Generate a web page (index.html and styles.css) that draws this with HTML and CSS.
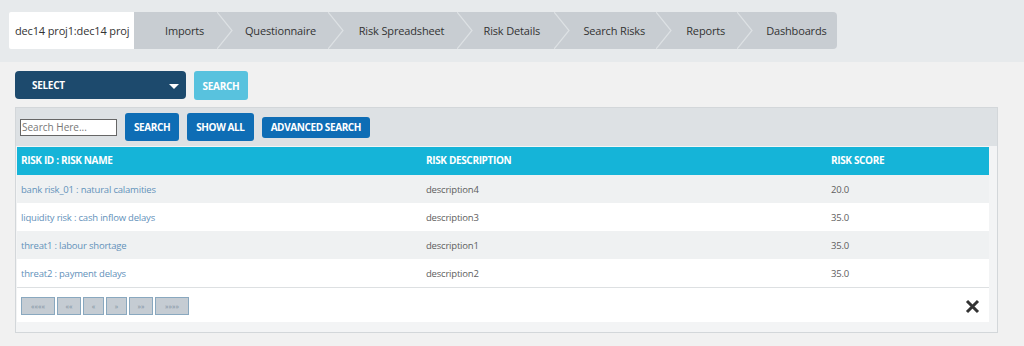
FILE: index.html
```html
<!DOCTYPE html>
<html lang="en">
<head>
  <meta charset="UTF-8" />
  <title>Search Risks</title>
  <link rel="stylesheet" href="styles.css">
</head>
<body>

  <header class="topbar">
    <nav class="tabs">
      <a class="tab current">dec14 proj1:dec14 proj</a>
      <div class="tab-strip">
        <a class="tab t-imports">Imports</a>
        <span class="sep"><svg width="16" height="37" viewBox="0 0 16 37"><polyline points="0,0 15,18.5 0,37" fill="none" stroke="#dde1e4" stroke-width="1.2"/></svg></span>
        <a class="tab t-quest">Questionnaire</a>
        <span class="sep"><svg width="16" height="37" viewBox="0 0 16 37"><polyline points="0,0 15,18.5 0,37" fill="none" stroke="#dde1e4" stroke-width="1.2"/></svg></span>
        <a class="tab t-sheet">Risk Spreadsheet</a>
        <span class="sep"><svg width="16" height="37" viewBox="0 0 16 37"><polyline points="0,0 15,18.5 0,37" fill="none" stroke="#dde1e4" stroke-width="1.2"/></svg></span>
        <a class="tab t-details">Risk Details</a>
        <span class="sep"><svg width="16" height="37" viewBox="0 0 16 37"><polyline points="0,0 15,18.5 0,37" fill="none" stroke="#dde1e4" stroke-width="1.2"/></svg></span>
        <a class="tab t-search">Search Risks</a>
        <span class="sep"><svg width="16" height="37" viewBox="0 0 16 37"><polyline points="0,0 15,18.5 0,37" fill="none" stroke="#dde1e4" stroke-width="1.2"/></svg></span>
        <a class="tab t-reports">Reports</a>
        <span class="sep"><svg width="16" height="37" viewBox="0 0 16 37"><polyline points="0,0 15,18.5 0,37" fill="none" stroke="#dde1e4" stroke-width="1.2"/></svg></span>
        <a class="tab t-dash">Dashboards</a>
      </div>
    </nav>
  </header>

  <main class="content">
    <div class="filter-row">
      <div class="select-box">
        <span>SELECT</span>
        <span class="caret"></span>
      </div>
      <button class="btn-light">SEARCH</button>
    </div>

    <section class="panel">
      <div class="toolbar">
        <input class="search-input" type="text" placeholder="Search Here...">
        <button class="btn-blue tall">SEARCH</button>
        <button class="btn-blue tall">SHOW ALL</button>
        <button class="btn-blue">ADVANCED SEARCH</button>
      </div>

      <div class="panel-body">
        <table class="risk-table">
          <thead>
            <tr>
              <th class="c-name">RISK ID : RISK NAME</th>
              <th class="c-desc">RISK DESCRIPTION</th>
              <th class="c-score">RISK SCORE</th>
            </tr>
          </thead>
          <tbody>
            <tr>
              <td><a>bank risk_01 : natural calamities</a></td>
              <td>description4</td>
              <td>20.0</td>
            </tr>
            <tr>
              <td><a>liquidity risk : cash inflow delays</a></td>
              <td>description3</td>
              <td>35.0</td>
            </tr>
            <tr>
              <td><a>threat1 : labour shortage</a></td>
              <td>description1</td>
              <td>35.0</td>
            </tr>
            <tr>
              <td><a>threat2 : payment delays</a></td>
              <td>description2</td>
              <td>35.0</td>
            </tr>
          </tbody>
        </table>

        <div class="table-footer">
          <div class="pager">
            <button class="pg w-first">&laquo;&laquo;&laquo;&laquo;</button>
            <button class="pg w-prev2">&laquo;&laquo;</button>
            <button class="pg w-one">&laquo;</button>
            <button class="pg w-one">&raquo;</button>
            <button class="pg w-prev2">&raquo;&raquo;</button>
            <button class="pg w-first">&raquo;&raquo;&raquo;&raquo;</button>
          </div>
          <span class="close-x">
            <svg width="15" height="15" viewBox="0 0 15 15"><path d="M2 2 L13 13 M13 2 L2 13" stroke="#333" stroke-width="3" stroke-linecap="butt"/></svg>
          </span>
        </div>
      </div>
    </section>
  </main>

</body>
</html>
```

FILE: styles.css
```css
* { margin: 0; padding: 0; box-sizing: border-box; }
body {
  font-family: 'Open Sans', 'Noto Sans', sans-serif;
  background: #f1f1f1;
  color: #333;
  width: 1024px;
  height: 346px;
  overflow: hidden;
}

/* --- Top tab bar --- */
.topbar {
  background: #e7eaec;
  height: 62px;
  padding: 12px 0 0 9px;
}

.tabs {
  display: flex;
  height: 37px;
}

.tab {
  display: flex;
  align-items: center;
  font-size: 11px;
  letter-spacing: -0.15px;
  color: #333;
  white-space: nowrap;
  cursor: pointer;
}

.tab.current {
  background: #fff;
  width: 125px;
  padding-left: 6px;
  border-radius: 2px 0 0 2px;
}

.tab-strip {
  display: flex;
  background: #c8cdd2;
  width: 703px;
  border-radius: 0 4px 4px 0;
}

.sep { display: flex; width: 16px; }

.t-imports { width: 83px; padding-left: 31px; }
.t-quest { width: 95px; padding-left: 12px; }
.t-sheet { width: 113px; padding-left: 15px; }
.t-details { width: 82px; padding-left: 11px; }
.t-search { width: 86px; padding-left: 13px; }
.t-reports { width: 65px; padding-left: 14px; }
.t-dash { width: 84px; padding-left: 13px; }

/* --- Select row --- */
.content { padding: 9px 26px 0 15px; }

.filter-row {
  display: flex;
  gap: 8px;
  align-items: flex-start;
}

.select-box {
  width: 171px;
  height: 28px;
  background: #1d4a6d;
  border-radius: 4px;
  color: #fff;
  font-size: 10px;
  font-weight: 700;
  letter-spacing: -0.3px;
  display: flex;
  align-items: center;
  justify-content: space-between;
  padding: 0 7px 0 17px;
  margin-bottom: 8px;
}

.caret {
  width: 0; height: 0;
  border-left: 5px solid transparent;
  border-right: 5px solid transparent;
  border-top: 5px solid #fff;
  margin-top: 2px;
}

button {
  font-family: inherit;
  border: none;
  cursor: pointer;
}

.btn-light {
  width: 54px;
  height: 29px;
  background: #58c2de;
  color: #fff;
  font-size: 10px;
  font-weight: 700;
  letter-spacing: -0.3px;
  border-radius: 3px;
}

/* --- Panel --- */
.panel {
  border: 1px solid #d3d7da;
  background: #eceeef;
}

.toolbar {
  background: #dde1e4;
  height: 38px;
  display: flex;
  align-items: center;
  gap: 8px;
  padding-left: 4px;
}

.search-input {
  width: 97px;
  height: 17px;
  border: 1px solid #666;
  font-family: inherit;
  font-size: 10px;
  padding-left: 1px;
  background: #fff;
}

.search-input::placeholder { color: #777; }

.btn-blue {
  background: #0e6db5;
  color: #fff;
  font-size: 10px;
  font-weight: 700;
  letter-spacing: -0.4px;
  border-radius: 3px;
  height: 21px;
  padding: 0 9px;
}

.btn-blue.tall { height: 28px; padding: 0 9px; }

.panel-body {
  background: #f3f4f5;
  padding: 1px 8px 10px 1px;
}

.risk-table {
  width: 972px;
  border-collapse: collapse;
  font-size: 10px;
}

.risk-table th {
  background: #15b4d8;
  color: #fff;
  font-weight: 700;
  text-align: left;
  height: 28px;
  padding: 0 0 3px 4px;
  letter-spacing: -0.35px;
}

.c-name, .c-desc { width: 405px; }

.risk-table td {
  height: 28px;
  padding: 1px 0 0 4px;
  font-size: 9.5px;
  color: #5e5e5e;
  letter-spacing: -0.2px;
}

.risk-table tbody tr:nth-child(odd) td { background: #eff1f2; }
.risk-table tbody tr:nth-child(even) td { background: #fff; }

.risk-table td a { color: #6391ba; cursor: pointer; }

.table-footer {
  width: 972px;
  height: 35px;
  background: #fff;
  border-top: 1px solid #dde0e2;
  display: flex;
  align-items: center;
  justify-content: space-between;
  padding: 0 9px 0 4px;
}

.pager { display: flex; gap: 2px; margin-top: 2px; }

.pg {
  height: 18px;
  background: #c5ccd3;
  border: 1px solid #89a8bf;
  color: #7d8fa0;
  font-size: 7px;
}

.w-first { width: 34px; }
.w-prev2 { width: 24px; }
.w-one { width: 21px; }

.close-x { display: flex; margin-top: 2px; }
```
